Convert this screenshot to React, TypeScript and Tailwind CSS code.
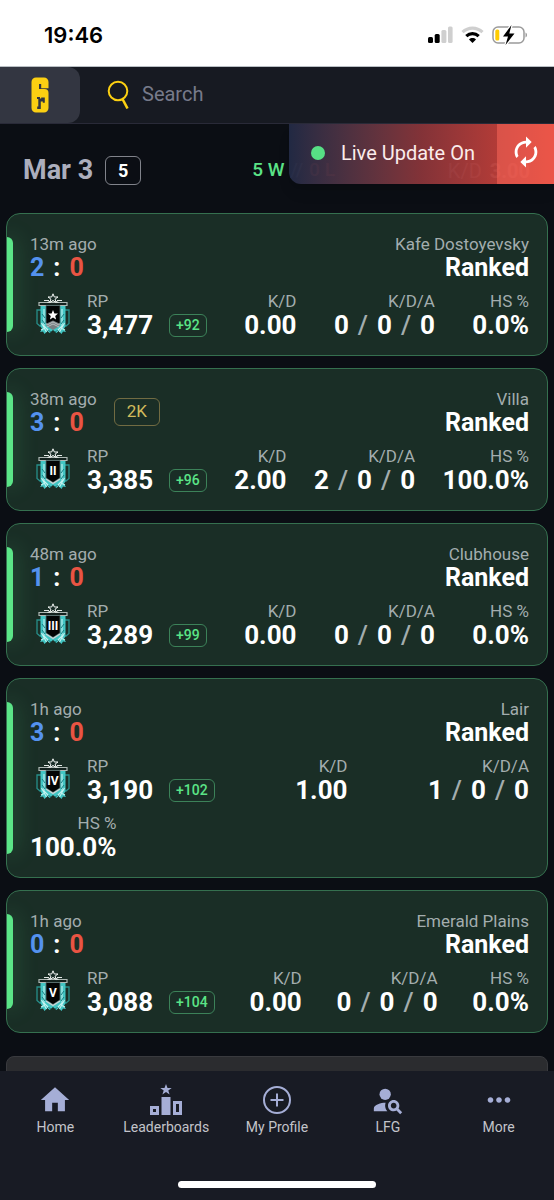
import type { ReactNode } from "react";
import { MdAutorenew, MdHome, MdMoreHoriz, MdPersonSearch } from "react-icons/md";

type Match = {
  time: string;
  map: string;
  score: [number, number];
  rank: string;
  rp: string;
  gain: string;
  kd: string;
  kda: [number, number, number];
  hs: string;
  multi?: string;
};

const matches: Match[] = [
  { time: "13m ago", map: "Kafe Dostoyevsky", score: [2, 0], rank: "I", rp: "3,477", gain: "+92", kd: "0.00", kda: [0, 0, 0], hs: "0.0%" },
  { time: "38m ago", map: "Villa", score: [3, 0], rank: "II", rp: "3,385", gain: "+96", kd: "2.00", kda: [2, 0, 0], hs: "100.0%", multi: "2K" },
  { time: "48m ago", map: "Clubhouse", score: [1, 0], rank: "III", rp: "3,289", gain: "+99", kd: "0.00", kda: [0, 0, 0], hs: "0.0%" },
  { time: "1h ago", map: "Lair", score: [3, 0], rank: "IV", rp: "3,190", gain: "+102", kd: "1.00", kda: [1, 0, 0], hs: "100.0%" },
  { time: "1h ago", map: "Emerald Plains", score: [0, 0], rank: "V", rp: "3,088", gain: "+104", kd: "0.00", kda: [0, 0, 0], hs: "0.0%" },
];

function StatusBar() {
  return (
    <div className="flex h-[67px] shrink-0 items-center justify-between border-b border-[#b9bfc4] bg-white pt-1 pr-[26px] pl-11">
      <span className="font-['Inter',sans-serif] text-[22px] leading-7 font-semibold text-black">19:46</span>
      <div className="flex items-center gap-2">
        <svg width="25" height="18" viewBox="0 0 25 18">
          <rect x="0" y="11" width="5" height="6" rx="1.5" fill="#000" />
          <rect x="6.7" y="8" width="5" height="9" rx="1.5" fill="#000" />
          <rect x="13.4" y="4" width="5" height="13" rx="1.5" fill="#cfcfcf" />
          <rect x="20" y="0.5" width="4.6" height="16.5" rx="1.5" fill="#cfcfcf" />
        </svg>
        <svg width="23" height="18" viewBox="0 0 23 18" fill="none">
          <path d="M1.5 6.2C7.3.7 15.7.7 21.5 6.2" stroke="#cfcfcf" strokeWidth="3.2" />
          <path d="M5.3 10.1c3.6-3.3 8.8-3.3 12.4 0" stroke="#000" strokeWidth="3.2" />
          <path d="M8 13.4c2-1.9 5-1.9 7 0L11.5 17z" fill="#000" />
        </svg>
        <svg width="36" height="20" viewBox="0 0 36 20">
          <rect x="1" y="2" width="31" height="16" rx="5" fill="none" stroke="#9b9b9b" strokeWidth="1.5" />
          <path d="M33.5 7.5c2 .7 2 4.3 0 5z" fill="#9b9b9b" />
          <rect x="3.3" y="4.5" width="4" height="11" rx="1.5" fill="#fc0" />
          <path d="M19.5 0 11 11.500h5L13.500 20 22.500 8.500h-5.200z" fill="#000" stroke="#fff" strokeWidth="2.500" paintOrder="stroke" />
        </svg>
      </div>
    </div>
  );
}

function Logo() {
  return (
    <svg width="18" height="36" viewBox="0 0 18 36">
      <path
        fill="#fcd012"
        fillRule="evenodd"
        d="M5 .5h8A4.500 4.500 0 0 1 17.500 5v6.300h-7.300V7H8v5h5.500a4 4 0 0 1 4 4v15a4.500 4.500 0 0 1-4.500 4.500H5A4.500 4.500 0 0 1 .5 31V5A4.500 4.500 0 0 1 5 .5zM6 20v2h1.300v7.500H6.200V32h3.600v-7.500h2v1.200h2v-5.200h-3.600v1H9V20z"
      />
    </svg>
  );
}

function Header() {
  return (
    <header className="flex h-14 shrink-0 items-center bg-[#171a22]">
      <button aria-label="R6 Tracker" className="flex h-full w-20 items-center justify-center rounded-r-xl bg-[#333641]">
        <Logo />
      </button>
      <label htmlFor="search" className="pl-[27px]">
        <svg width="24" height="30" viewBox="0 0 24 30" fill="none" stroke="#fcd012" strokeWidth="2">
          <circle cx="11" cy="11" r="9.3" />
          <path d="M15.500 19 20.500 28.500" strokeWidth="2.600" />
        </svg>
      </label>
      <input
        id="search"
        type="search"
        placeholder="Search"
        className="min-w-0 flex-1 bg-transparent pb-0.5 pl-[11px] text-xl text-white outline-none placeholder:text-[#777a8b]"
      />
    </header>
  );
}

function LiveUpdate() {
  return (
    <div className="absolute top-0 right-0 flex h-[60px] overflow-hidden rounded-bl-xl bg-linear-to-r from-[#222a45]/96 via-[#883439]/96 via-50% to-[#e04335]/96 shadow-lg">
      <div className="flex items-center gap-4 px-[22px] pb-0.5">
        <span className="size-3.5 rounded-full bg-[#57df85]" />
        <span className="text-xl text-[#fbeceb]">Live Update On</span>
      </div>
      <button aria-label="Refresh" className="flex w-[57px] items-center justify-center bg-[#ff6a5c]/50 pb-1 text-white">
        <MdAutorenew className="size-[34px]" />
      </button>
    </div>
  );
}

function RankEmblem({ rank }: { rank: string }) {
  return (
    <svg width="34" height="42" viewBox="0 0 34 42" aria-label={`Champion ${rank}`}>
      {/* side brackets */}
      <path d="M5.500 17H1v13.500l3 2.500h3M28.500 17H33v13.500L30 33h-3" fill="none" stroke="#278f8b" strokeWidth="1.300" />
      {/* laurels and drapes */}
      <path d="M4.500 13h25v20l-1.500 3 2 3-3-.5-1.500 2.500-3-3-2 2L17 37l-3.500 3-2-2-3 3L7 38.500l-3 .5 2-3-1.500-3z" fill="#43c6c4" />
      <path d="M8 16v17l5 5M26 16v17l-5 5M5.500 30l5 9M28.500 30l-5 9M5 37l4-2M29 37l-4-2" stroke="#c4f3f0" strokeWidth="1.100" fill="none" />
      <path d="M6 21l3 4M6 27l3 4M28 21l-3 4M28 27l-3 4M12 37l3 2M22 37l-3 2" stroke="#177f82" strokeWidth="1" />
      {/* top bar */}
      <path d="M3 9.500h28v3H3z" fill="#14231f" stroke="#aeb8b4" strokeWidth="1.200" />
      <path d="M8 7.500h5M21 7.500h5M11.500 9.500l5.500-2 5.500 2" stroke="#e4e8e6" strokeWidth="1.200" fill="none" />
      <path d="M17 .8l1.300 3.200h3.700l-2.900 2.100 1.100 3.400-3.200-2-3.200 2 1.100-3.400L12 4h3.700z" fill="#172b26" stroke="#f5f8f6" strokeWidth="1" />
      {/* shield */}
      <path d="M10 12.500h14V30l-7 4.500L10 30z" fill="#030505" stroke="#56706e" strokeWidth="0.800" />
      <path d="M10 31 17 35.500 24 31" fill="none" stroke="#d0d4d5" strokeWidth="1.300" />
      {rank === "I" ? (
        <>
          <path d="M17 17l1.400 3.400 3.600.2-2.800 2.300.9 3.500-3.100-1.900-3.100 1.900.9-3.500-2.800-2.300 3.600-.2z" fill="#fff" />
          <path d="M10.500 30.500 17 27.500l6.500 3v2.500L17 37l-6.500-4z" fill="#787f82" />
          <path d="M11 32l6-3 6 3M11 34l6-3 6 3" fill="none" stroke="#c8cccd" strokeWidth="0.800" />
        </>
      ) : (
        <text x="17" y="27" textAnchor="middle" fontSize="12" fontWeight="700" fill="#fff">
          {rank}
        </text>
      )}
    </svg>
  );
}

function Stat({ label, children }: { label: string; children: ReactNode }) {
  return (
    <div className="text-right">
      <div className="text-[17px] leading-[22px] text-[#a3adae]">{label}</div>
      <div className="text-[26px] leading-[26px] font-bold text-white">{children}</div>
    </div>
  );
}

function MatchCard({ match }: { match: Match }) {
  const [kills, deaths, assists] = match.kda;
  return (
    <article className="relative overflow-hidden rounded-[14px] border border-[#35704f] bg-[#1a2e26] pt-5 pr-[18px] pb-[17px] pl-[23px]">
      {/* win marker */}
      <span className="absolute inset-y-[23px] left-0 w-1.5 rounded-r-md bg-[#5be487] shadow-[0_0_22px_0_rgba(91,228,135,0.4)]" />
      <div className="flex justify-between">
        <div className="flex gap-[17px]">
          <div>
            <div className="text-[17px] leading-[21px] text-[#a3adae]">{match.time}</div>
            <div className="flex gap-[9px] text-[25px] leading-[26px] font-bold text-white">
              <span className="text-[#5592ef]">{match.score[0]}</span>
              <span>:</span>
              <span className="text-[#ea5443]">{match.score[1]}</span>
            </div>
          </div>
          {match.multi && (
            <span className="mt-[9px] flex h-7 items-center self-start rounded-md border border-[#716b42] px-3 text-[17px] text-[#d1bb5c]">
              {match.multi}
            </span>
          )}
        </div>
        <div className="text-right">
          <div className="text-[17px] leading-[21px] text-[#a3adae]">{match.map}</div>
          <div className="text-[25px] leading-[26px] font-bold text-white">Ranked</div>
        </div>
      </div>

      <div className="mt-[9px] flex flex-wrap justify-between gap-x-[26px] gap-y-[9px]">
        <div className="flex items-center pl-1.5">
          <RankEmblem rank={match.rank} />
          <div className="pl-[17px]">
            <div className="text-[17px] leading-[22px] text-[#a3adae]">RP</div>
            <div className="flex items-center gap-4 text-[26px] leading-[26px] font-bold text-white">
              {match.rp}
              <span className="flex h-[23px] items-center rounded-md border border-[#3c8259] px-1.5 text-sm font-medium text-[#5be487]">
                {match.gain}
              </span>
            </div>
          </div>
        </div>
        <Stat label="K/D">{match.kd}</Stat>
        <Stat label="K/D/A">
          <span className="flex justify-end gap-[9px]">
            <span>{kills}</span>
            <span className="font-medium text-[#a3adae]">/</span>
            <span>{deaths}</span>
            <span className="font-medium text-[#a3adae]">/</span>
            <span>{assists}</span>
          </span>
        </Stat>
        <Stat label="HS %">{match.hs}</Stat>
      </div>
    </article>
  );
}

function LeaderboardIcon() {
  return (
    <svg width="34" height="34" viewBox="0 0 34 34" fill="currentColor">
      <path d="M17 1l1.500 4h4.200l-3.400 2.500 1.300 4L17 9l-3.600 2.500 1.300-4L11.300 5h4.200z" />
      <path d="M12.500 14h9v18h-9z" />
      <path fillRule="evenodd" d="M1 23h9v9H1zM4 26v3h3v-3zM24 18h9v14h-9zM27 21v8h3v-8z" />
    </svg>
  );
}

function ProfileIcon() {
  return (
    <svg width="34" height="34" viewBox="0 0 34 34" fill="none" stroke="currentColor" strokeWidth="2">
      <circle cx="17" cy="17" r="13" />
      <path d="M17 10.500v13M10.500 17h13" />
    </svg>
  );
}

const navItems = [
  { label: "Home", icon: <MdHome className="size-[34px]" /> },
  { label: "Leaderboards", icon: <LeaderboardIcon /> },
  { label: "My Profile", icon: <ProfileIcon /> },
  { label: "LFG", icon: <MdPersonSearch className="size-[34px]" /> },
  { label: "More", icon: <MdMoreHoriz className="size-[34px]" /> },
];

function BottomNav() {
  return (
    <nav className="shrink-0 bg-[#181b24] pt-3 pb-3">
      <div className="grid grid-cols-5">
        {navItems.map((item) => (
          <a key={item.label} href="#" className="flex flex-col items-center text-[#a5aed6]">
            {item.icon}
            <span className="text-sm leading-5 text-[#c3c4ca]">{item.label}</span>
          </a>
        ))}
      </div>
      <div className="mx-auto mt-11 h-[7px] w-[198px] rounded-full bg-white" />
    </nav>
  );
}

export default function App() {
  return (
    <div className="flex h-screen flex-col overflow-hidden bg-[#0b0e14] font-['Roboto',sans-serif]">
      <StatusBar />
      <Header />
      <main className="relative min-h-0 flex-1 overflow-hidden border-t border-[#292a38] px-1.5">
        <div className="flex h-[89px] items-center gap-3 pt-1 pr-[18px] pl-[17px]">
          <h2 className="text-[27px] font-bold text-[#acaebd]">Mar 3</h2>
          <span className="flex h-[29px] w-9 items-center justify-center rounded-md border border-[#81838b] text-lg font-bold text-white">
            5
          </span>
          <div className="ml-[99px] flex gap-1.5 text-[19px] font-medium">
            <span className="text-[#5be487]">5 W</span>
            <span className="text-[#6e7180]">//</span>
            <span className="text-[#ea5443]">0 L</span>
          </div>
          <div className="ml-auto flex gap-2 text-xl text-[#acaebd]">
            K/D <span className="font-bold text-white">3.00</span>
          </div>
        </div>
        <div className="flex flex-col gap-3">
          {matches.map((match) => (
            <MatchCard key={match.rp} match={match} />
          ))}
        </div>
        <div className="mt-[23px] h-36 rounded-t-lg border border-[#393a3e] bg-[#2b2c2f]" />
        <LiveUpdate />
      </main>
      <BottomNav />
    </div>
  );
}
